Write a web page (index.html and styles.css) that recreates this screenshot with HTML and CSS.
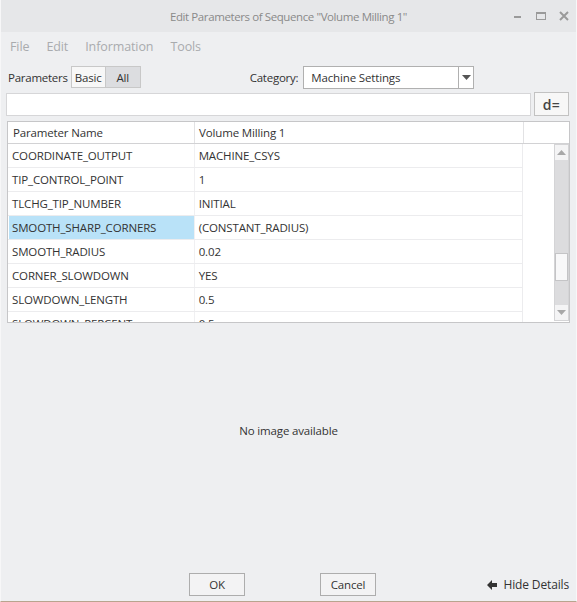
FILE: index.html
```html
<!DOCTYPE html>
<html>
<head>
<meta charset="utf-8">
<link rel="stylesheet" href="styles.css">
</head>
<body>
<div class="window">
  <div class="titlebar">
    <div class="title">Edit Parameters of Sequence "Volume Milling 1"</div>
    <div class="controls">
      <svg class="ctl" width="12" height="12" viewBox="0 0 12 12"><rect x="2" y="6" width="7" height="2" fill="#9a9a9a"/></svg>
      <svg class="ctl" width="12" height="12" viewBox="0 0 12 12"><rect x="1.5" y="2.5" width="9" height="7" fill="none" stroke="#9a9a9a"/><rect x="1" y="2" width="10" height="2" fill="#9a9a9a"/></svg>
      <svg class="ctl" width="12" height="12" viewBox="0 0 12 12"><path d="M2 2 L10 10 M10 2 L2 10" stroke="#9a9a9a" stroke-width="2"/></svg>
    </div>
  </div>
  <div class="menubar">
    <span class="menu">File</span>
    <span class="menu">Edit</span>
    <span class="menu">Information</span>
    <span class="menu">Tools</span>
  </div>
  <div class="toolbar">
    <span class="label">Parameters</span>
    <div class="seg">
      <span class="seg-btn">Basic</span>
      <span class="seg-btn active">All</span>
    </div>
    <span class="label cat">Category:</span>
    <div class="select">
      <span class="select-text">Machine Settings</span>
      <span class="select-arrow"><svg width="9" height="6" viewBox="0 0 9 6"><path d="M0 0 L9 0 L4.5 5 Z" fill="#555"/></svg></span>
    </div>
  </div>
  <div class="searchrow">
    <div class="search"></div>
    <div class="dbtn">d=</div>
  </div>
  <div class="table">
    <div class="thead">
      <div class="c1">Parameter Name</div>
      <div class="c2">Volume Milling 1</div>
      <div class="c3"></div>
    </div>
    <div class="tbody">
      <div class="rows">
        <div class="row"><div class="c1">COORDINATE_OUTPUT</div><div class="c2">MACHINE_CSYS</div></div>
        <div class="row"><div class="c1">TIP_CONTROL_POINT</div><div class="c2">1</div></div>
        <div class="row"><div class="c1">TLCHG_TIP_NUMBER</div><div class="c2">INITIAL</div></div>
        <div class="row"><div class="c1 sel">SMOOTH_SHARP_CORNERS</div><div class="c2">(CONSTANT_RADIUS)</div></div>
        <div class="row"><div class="c1">SMOOTH_RADIUS</div><div class="c2">0.02</div></div>
        <div class="row"><div class="c1">CORNER_SLOWDOWN</div><div class="c2">YES</div></div>
        <div class="row"><div class="c1">SLOWDOWN_LENGTH</div><div class="c2">0.5</div></div>
        <div class="row"><div class="c1">SLOWDOWN_PERCENT</div><div class="c2">0.5</div></div>
      </div>
      <div class="blankcol"></div>
      <div class="scrollbar">
        <div class="sb-btn"><svg width="9" height="5" viewBox="0 0 9 5"><path d="M0 5 L9 5 L4.5 0 Z" fill="#a8a8a8"/></svg></div>
        <div class="sb-track">
          <div class="sb-thumb"></div>
        </div>
        <div class="sb-btn"><svg width="9" height="5" viewBox="0 0 9 5"><path d="M0 0 L9 0 L4.5 5 Z" fill="#a8a8a8"/></svg></div>
      </div>
    </div>
  </div>
  <div class="preview">No image available</div>
  <div class="footer">
    <div class="btn ok">OK</div>
    <div class="btn cancel">Cancel</div>
    <div class="hide">
      <svg width="11" height="10" viewBox="0 0 11 10"><path d="M0 5 L5 0 L5 3 L10 3 L10 7 L5 7 L5 10 Z" fill="#333"/></svg>
      <span>Hide Details</span>
    </div>
  </div>
</div>
</body>
</html>
```

FILE: styles.css
```css
* { box-sizing: border-box; }
html, body { margin: 0; padding: 0; }
body {
  width: 577px;
  height: 602px;
  overflow: hidden;
  background: #eeeff1;
  font-family: "Open Sans", "Noto Sans", sans-serif;
  font-size: 11.5px;
  letter-spacing: -0.15px;
  color: #333;
}
.window {
  width: 577px;
  height: 602px;
  display: flex;
  flex-direction: column;
  border-left: 1px solid #f7f7f8;
  border-right: 1px solid #f7f7f8;
  border-bottom: 1px solid #b8a48e;
}
.titlebar {
  height: 32px;
  flex: none;
  background: #e6e7e9;
  display: flex;
  align-items: center;
  position: relative;
}
.title {
  flex: 1;
  text-align: center;
  color: #8a8a8a;
  font-size: 11.5px;
  letter-spacing: -0.4px;
}
.controls {
  position: absolute;
  right: 6px;
  top: 10px;
  display: flex;
  gap: 11px;
}
.ctl { display: block; }
.menubar {
  height: 28px;
  flex: none;
  display: flex;
  align-items: center;
  padding-left: 9px;
  color: #a9abae;
  font-size: 12.5px;
  letter-spacing: -0.1px;
}
.menu { margin-right: 17px; }
.toolbar {
  height: 32px;
  flex: none;
  display: flex;
  align-items: flex-start;
  padding: 6px 0 0 7px;
}
.label { color: #333; margin-right: 3px; height: 22px; display: flex; align-items: center; letter-spacing: -0.25px; }
.seg {
  display: flex;
  height: 22px;
  border: 1px solid #c8c8c8;
}
.seg-btn {
  display: flex;
  align-items: center;
  padding: 0 3px;
  background: #f7f7f7;
}
.seg-btn + .seg-btn { border-left: 1px solid #c8c8c8; }
.seg-btn.active {
  background: #dcdde0;
  width: 35px;
  justify-content: center;
  padding: 0;
}
.cat { margin-left: 109px; margin-right: 5px; }
.select {
  display: flex;
  width: 171px;
  height: 23px;
  background: #fff;
  border: 1px solid #b0b0b0;
}
.select-text {
  flex: 1;
  display: flex;
  align-items: center;
  padding-left: 7px;
}
.select-arrow {
  width: 15px;
  border-left: 1px solid #b0b0b0;
  display: flex;
  align-items: center;
  justify-content: center;
}
.searchrow {
  display: flex;
  padding: 0 7px 0 5px;
  height: 24px;
  flex: none;
  align-items: center;
  gap: 3px;
}
.search {
  flex: 1;
  height: 23px;
  background: #fff;
  border: 1px solid #d6d6d8;
}
.dbtn {
  width: 35px;
  height: 24px;
  border: 1px solid #c2c2c2;
  background: #f7f7f7;
  display: flex;
  align-items: center;
  justify-content: center;
  font-size: 14px;
  color: #444;
  font-weight: 600;
  letter-spacing: 0.5px;
}
.table {
  margin: 5px 6px 0 6px;
  height: 202px;
  flex: none;
  border: 1px solid #c6c6c8;
  background: #fff;
  display: flex;
  flex-direction: column;
}
.thead {
  display: flex;
  height: 22px;
  border-bottom: 1px solid #d2d2d4;
  flex: none;
}
.thead > div { display: flex; align-items: center; }
.c1 {
  width: 186px;
  padding-left: 5px;
  display: flex;
  align-items: center;
}
.c2 {
  width: 329px;
  padding-left: 4px;
  border-left: 1px solid #e2e2e4;
  display: flex;
  align-items: center;
}
.thead .c3 {
  flex: 1;
  border-left: 1px solid #e2e2e4;
}
.tbody {
  flex: 1;
  display: flex;
  overflow: hidden;
}
.rows {
  width: 515px;
  overflow: hidden;
}
.row {
  display: flex;
  height: 24px;
  border-bottom: 1px solid #ececee;
}
.row .c1 { padding-left: 3px; margin-left: 1px; width: 185px; padding-bottom: 1px; }
.row .c2 { border-left: 1px solid #f0f0f2; padding-bottom: 1px; }
.c1.sel { background: #b9e2f8; }
.blankcol {
  width: 32px;
  border-left: 1px solid #ececee;
}
.scrollbar {
  width: 15px;
  height: 177px;
  display: flex;
  flex-direction: column;
  background: #dcdcde;
  border: 1px solid #d4d4d6;
}
.sb-btn {
  height: 15px;
  background: #f4f4f5;
  display: flex;
  align-items: center;
  justify-content: center;
  flex: none;
}
.sb-track {
  flex: 1;
  display: flex;
  flex-direction: column;
  padding-top: 93px;
}
.sb-thumb {
  height: 28px;
  background: #f8f8f9;
  border: 1px solid #c4c4c6;
}
.preview {
  flex: 1;
  display: flex;
  align-items: center;
  justify-content: center;
  padding-bottom: 24px;
  color: #333;
}
.footer {
  height: 40px;
  flex: none;
  display: flex;
  align-items: flex-start;
  padding-top: 12px;
}
.btn {
  height: 23px;
  width: 56px;
  border: 1px solid #adadad;
  background: #f3f3f4;
  display: flex;
  align-items: center;
  justify-content: center;
}
.ok { margin-left: 188px; }
.cancel { margin-left: 75px; }
.hide {
  margin-left: auto;
  margin-right: 7px;
  display: flex;
  align-items: center;
  gap: 6px;
  height: 23px;
  font-size: 12px;
}
.hide svg { display: block; }
```
